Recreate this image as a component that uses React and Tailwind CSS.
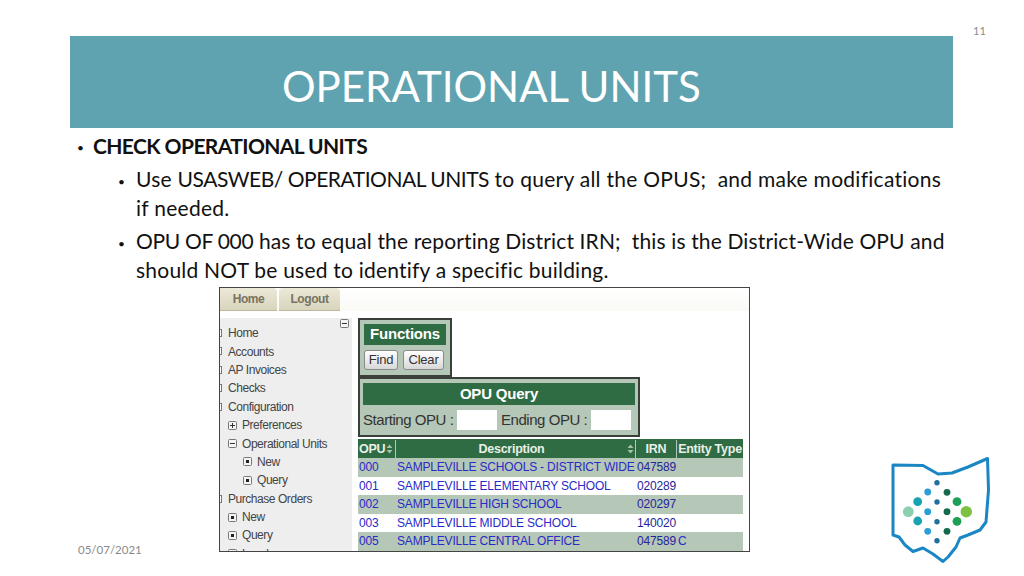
const MENU = [
  { label: "Home", level: 0, icon: "stub" },
  { label: "Accounts", level: 0, icon: "stub" },
  { label: "AP Invoices", level: 0, icon: "stub" },
  { label: "Checks", level: 0, icon: "stub" },
  { label: "Configuration", level: 0, icon: "stub" },
  { label: "Preferences", level: 1, icon: "plus" },
  { label: "Operational Units", level: 1, icon: "minus" },
  { label: "New", level: 2, icon: "dot" },
  { label: "Query", level: 2, icon: "dot" },
  { label: "Purchase Orders", level: 0, icon: "stub" },
  { label: "New", level: 1, icon: "dot" },
  { label: "Query", level: 1, icon: "dot" },
  { label: "Local", level: 1, icon: "plus" },
];

const ROWS = [
  ["000", "SAMPLEVILLE SCHOOLS - DISTRICT WIDE", "047589", ""],
  ["001", "SAMPLEVILLE ELEMENTARY SCHOOL", "020289", ""],
  ["002", "SAMPLEVILLE HIGH SCHOOL", "020297", ""],
  ["003", "SAMPLEVILLE MIDDLE SCHOOL", "140020", ""],
  ["005", "SAMPLEVILLE CENTRAL OFFICE", "047589", "C"],
];

function TreeIcon({ type }) {
  if (type === "stub") {
    return <span className="absolute left-[-4px] top-[5px] w-[6px] h-[8px] border border-[#777] bg-white" />;
  }
  return (
    <svg width="9" height="9" viewBox="0 0 9 9" className="shrink-0">
      <rect x="0.5" y="0.5" width="8" height="8" rx="1" fill="#f4f4f4" stroke="#777" />
      {type === "minus" && <path d="M2 4.5h5" stroke="#333" />}
      {type === "plus" && <path d="M2 4.5h5M4.5 2v5" stroke="#333" />}
      {type === "dot" && <rect x="3" y="3" width="3" height="3" fill="#222" />}
    </svg>
  );
}

function Sort() {
  return (
    <svg width="7" height="10" viewBox="0 0 7 10" className="shrink-0">
      <path d="M3.500 0.500L6.500 4H0.500zM3.500 9.500L0.500 6H6.500z" fill="#a9c0ac" />
    </svg>
  );
}

function OhioLogo() {
  const dots = [
    [57, 32.7, 2.7, "#1f6f9f"], [57, 52, 2.7, "#1f6f9f"], [57, 71.7, 2.7, "#1f6f9f"], [57, 90.7, 2.7, "#1f6f9f"],
    [47.7, 42, 3.4, "#2a9fd6"], [47.7, 61.7, 3.4, "#2a9fd6"], [47.7, 81.3, 3.4, "#2a9fd6"],
    [37.7, 51.7, 4.4, "#17a3b0"], [37.7, 71, 4.4, "#17a3b0"], [28.3, 61.7, 5.4, "#8dd0b0"],
    [67, 42.3, 3.4, "#14694a"], [67, 61.7, 3.4, "#14694a"], [67, 81.3, 3.4, "#14694a"],
    [77, 51.7, 4.4, "#1f9e57"], [77, 71.3, 4.4, "#1f9e57"], [86.3, 61.7, 5.7, "#7cc142"],
  ];
  return (
    <svg width="120" height="120" viewBox="0 0 120 120" className="shrink-0">
      <path
        d="M13 15L43 15.500L58 24L72 23L88 17L107.500 8.500L108.500 40L106 72L100 80L88 85L80 88L76 97L68 107L63 111.500L53 104L43 98L33 101.500L25 95L19 87L13 85Z"
        fill="none"
        stroke="#1b86c4"
        strokeWidth="3"
        strokeLinejoin="round"
      />
      {dots.map(([cx, cy, r, fill], i) => (
        <circle key={i} cx={cx} cy={cy} r={r} fill={fill} />
      ))}
    </svg>
  );
}

function Bullet({ children, bold, indent }) {
  return (
    <div className={indent ? "flex pl-[48px] pr-[4px]" : "flex pl-[7px]"}>
      <span className={indent ? "w-[18px] shrink-0 text-[12px] pt-[8px]" : "w-[16px] shrink-0 text-[12px] pt-[7px]"}>•</span>
      <span className={bold ? "font-bold text-[21px] leading-[28px] tracking-[-0.6px]" : "text-[21px] leading-[28.500px]"}>
        {children}
      </span>
    </div>
  );
}

function WebCapture() {
  return (
    <div className="w-[531px] h-[265px] shrink-0 border border-[#444] bg-white overflow-hidden flex flex-col font-['Liberation_Sans',sans-serif] text-[12px]">
      <div className="h-[23px] flex items-start bg-gradient-to-b from-white to-[#fafaf6] shrink-0">
        <div className="w-[57px] h-[23px] bg-gradient-to-b from-[#ece9d8] to-[#d9d4bc] border-b border-[#bdb89f] rounded-tr-[4px] text-[#77745f] font-bold tracking-[-0.4px] flex items-center justify-center">Home</div>
        <div className="ml-[2px] w-[61px] h-[23px] bg-gradient-to-b from-[#ece9d8] to-[#d9d4bc] border-b border-[#bdb89f] rounded-t-[4px] text-[#77745f] font-bold tracking-[-0.4px] flex items-center justify-center">Logout</div>
      </div>
      <div className="flex flex-1 min-h-0 pt-[7px]">
        <div className="w-[132px] shrink-0 bg-[#eeeeee] relative pt-[6px]">
          <span className="absolute right-[3px] top-[1px]"><TreeIcon type="minus" /></span>
          {MENU.map((m, i) => (
            <div
              key={i}
              className={
                m.level === 0
                  ? "h-[18.400px] relative flex items-center pl-[8px] text-[#444] whitespace-nowrap tracking-[-0.45px]"
                  : m.level === 1
                  ? "h-[18.400px] flex items-center gap-[5px] pl-[8px] text-[#444] whitespace-nowrap tracking-[-0.45px]"
                  : "h-[18.400px] flex items-center gap-[5px] pl-[23px] text-[#444] whitespace-nowrap tracking-[-0.45px]"
              }
            >
              <TreeIcon type={m.icon} />
              {m.label}
            </div>
          ))}
        </div>
        <div className="ml-[6px] w-[386px] flex flex-col items-start">
          <div className="w-[94px] h-[59px] bg-[#b5c7b6] border-[2px] border-[#3a3f3a] px-[4px] pt-[4px]">
            <div className="h-[21px] bg-[#2f6b43] text-white font-bold text-[15px] tracking-[-0.2px] flex items-center justify-center">Functions</div>
            <div className="flex gap-[5px] mt-[5px]">
              <div className="w-[34px] h-[20px] bg-gradient-to-b from-white to-[#d8d8d8] border border-[#8a8a8a] rounded-[3px] text-[#333] text-[13px] tracking-[-0.2px] flex items-center justify-center">Find</div>
              <div className="w-[41px] h-[20px] bg-gradient-to-b from-white to-[#d8d8d8] border border-[#8a8a8a] rounded-[3px] text-[#333] text-[13px] tracking-[-0.2px] flex items-center justify-center">Clear</div>
            </div>
          </div>
          <div className="w-[282px] h-[60px] bg-[#b5c7b6] border-[2px] border-[#3a3f3a] px-[3px] pt-[4px]">
            <div className="h-[22px] bg-[#2f6b43] text-white font-bold text-[15px] tracking-[-0.2px] flex items-center justify-center">OPU Query</div>
            <div className="flex items-center mt-[4px] text-[#333] text-[15px] tracking-[-0.45px] whitespace-nowrap">
              <span className="w-[94px] shrink-0">Starting OPU :</span>
              <span className="w-[40px] h-[20px] bg-white shrink-0" />
              <span className="w-[94px] shrink-0 pl-[4px]">Ending OPU :</span>
              <span className="w-[40px] h-[20px] bg-white shrink-0" />
            </div>
          </div>
          <div className="w-[385px] mt-[2px]">
            <div className="grid grid-cols-[38px_240px_41px_66px] h-[19px] pt-[1px] bg-[#2f6b43] text-[#e8f0e8] font-bold text-[12.500px] tracking-[-0.25px]">
              <div className="flex items-center justify-between pr-[2px] pl-[1px] border-r border-[#b5c7b6]">OPU<Sort /></div>
              <div className="flex items-center justify-between pr-[1px] border-r border-[#b5c7b6]"><span className="flex-1 text-center">Description</span><Sort /></div>
              <div className="flex items-center justify-center border-r border-[#b5c7b6]">IRN</div>
              <div className="flex items-center justify-center whitespace-nowrap">Entity Type</div>
            </div>
            {ROWS.map((r, i) => (
              <div
                key={r[0]}
                className={
                  i % 2 === 0
                    ? "grid grid-cols-[38px_240px_41px_66px] h-[18.500px] items-center bg-[#b5c7b6] text-[#2a2ac8] tracking-[-0.18px] whitespace-nowrap"
                    : "grid grid-cols-[38px_240px_41px_66px] h-[18.500px] items-center bg-white text-[#2a2ac8] tracking-[-0.18px] whitespace-nowrap"
                }
              >
                <div className="pl-[1px]">{r[0]}</div>
                <div className="pl-[1px] overflow-hidden">{r[1]}</div>
                <div className="pl-[1px] text-[#25259a]">{r[2]}</div>
                <div className="pl-[1px]">{r[3]}</div>
              </div>
            ))}
          </div>
        </div>
      </div>
    </div>
  );
}

export default function App() {
  return (
    <div className="w-[1024px] h-[576px] bg-white overflow-hidden font-['Lato',sans-serif] text-[#111]">
      <div className="h-[36px] pl-[973px] pt-[23px] text-[11px] leading-[16px] text-[#8a8a8a]">11</div>
      <div className="ml-[70px] w-[883px] h-[92px] bg-[#5fa3b0] flex items-center pl-[212px]">
        <h1 className="text-[42px] leading-none font-normal text-white tracking-[0px] pt-[8px]">OPERATIONAL UNITS</h1>
      </div>
      <div className="ml-[70px] w-[883px] h-[159px] pt-[4px]">
        <Bullet bold>CHECK OPERATIONAL UNITS</Bullet>
        <div className="mt-[5px]">
          <Bullet indent>
            <span className="tracking-[0.27px]">Use </span>
            <span className="tracking-[-0.48px]">USASWEB/ OPERATIONAL UNITS</span>
            <span className="tracking-[0.27px]"> to query all the OPUS;&nbsp; and make modifications if needed.</span>
          </Bullet>
        </div>
        <div className="mt-[5px]">
          <Bullet indent>
            <span className="tracking-[-0.3px]">OPU OF 000</span>
            <span className="tracking-[0.14px]"> has to equal the reporting District IRN;&nbsp; this is the District-Wide OPU and </span>
            <span className="tracking-[0.22px]">should NOT be used to identify a specific building.</span>
          </Bullet>
        </div>
      </div>
      <div className="flex h-[276px] pl-[78px]">
        <div className="w-[141px] shrink-0 pt-[255px] text-[11.500px] leading-[16px] text-[#8a8a8a]">05/07/2021</div>
        <WebCapture />
        <div className="ml-[130px] -mt-[10px] pt-[173px]">
          <OhioLogo />
        </div>
      </div>
    </div>
  );
}
